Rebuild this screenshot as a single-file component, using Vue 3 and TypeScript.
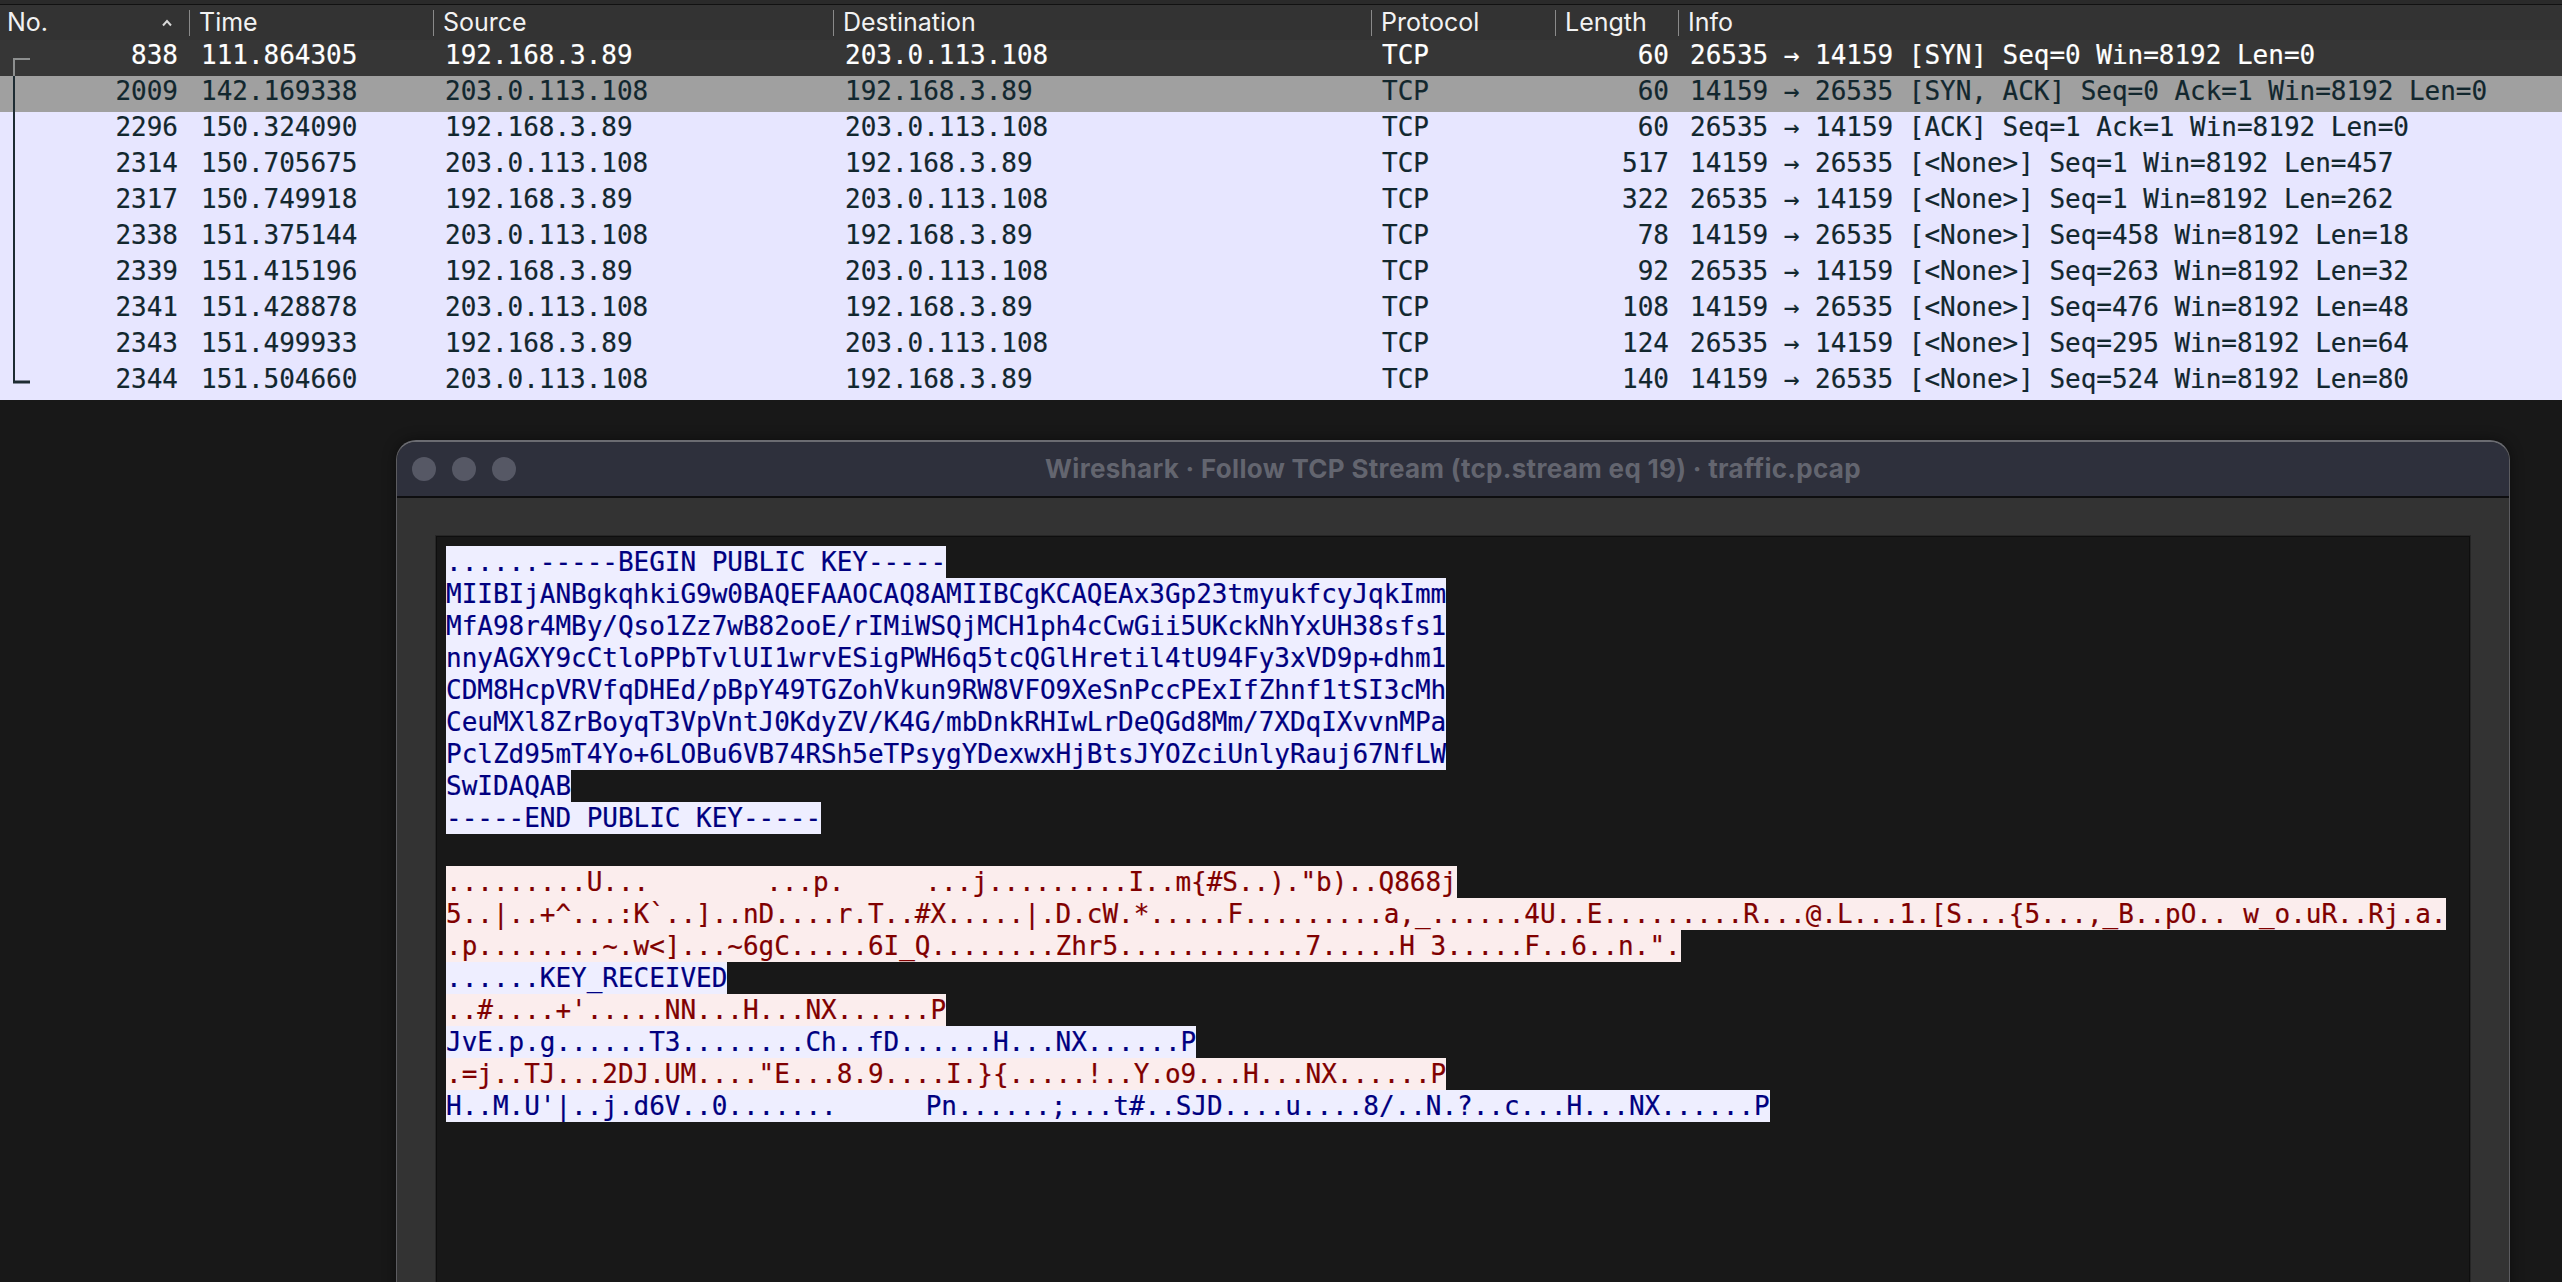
<script setup lang="ts">
interface Packet { no: number; time: string; src: string; dst: string; len: number; info: string }
const A = '192.168.3.89'
const B = '203.0.113.108'
const packets: Packet[] = [
  { no: 838, time: '111.864305', src: A, dst: B, len: 60, info: '26535 → 14159 [SYN] Seq=0 Win=8192 Len=0' },
  { no: 2009, time: '142.169338', src: B, dst: A, len: 60, info: '14159 → 26535 [SYN, ACK] Seq=0 Ack=1 Win=8192 Len=0' },
  { no: 2296, time: '150.324090', src: A, dst: B, len: 60, info: '26535 → 14159 [ACK] Seq=1 Ack=1 Win=8192 Len=0' },
  { no: 2314, time: '150.705675', src: B, dst: A, len: 517, info: '14159 → 26535 [<None>] Seq=1 Win=8192 Len=457' },
  { no: 2317, time: '150.749918', src: A, dst: B, len: 322, info: '26535 → 14159 [<None>] Seq=1 Win=8192 Len=262' },
  { no: 2338, time: '151.375144', src: B, dst: A, len: 78, info: '14159 → 26535 [<None>] Seq=458 Win=8192 Len=18' },
  { no: 2339, time: '151.415196', src: A, dst: B, len: 92, info: '26535 → 14159 [<None>] Seq=263 Win=8192 Len=32' },
  { no: 2341, time: '151.428878', src: B, dst: A, len: 108, info: '14159 → 26535 [<None>] Seq=476 Win=8192 Len=48' },
  { no: 2343, time: '151.499933', src: A, dst: B, len: 124, info: '26535 → 14159 [<None>] Seq=295 Win=8192 Len=64' },
  { no: 2344, time: '151.504660', src: B, dst: A, len: 140, info: '14159 → 26535 [<None>] Seq=524 Win=8192 Len=80' },
]

const columns = ['Time', 'Source', 'Destination', 'Protocol', 'Length', 'Info']

interface Seg { text?: string; gap?: number }
interface Line { kind: 'c' | 's' | 'blank'; segs: Seg[] }
const t = (kind: 'c' | 's', text: string): Line => ({ kind, segs: [{ text }] })

const lines: Line[] = [
  t('c', '......-----BEGIN PUBLIC KEY-----'),
  t('c', 'MIIBIjANBgkqhkiG9w0BAQEFAAOCAQ8AMIIBCgKCAQEAx3Gp23tmyukfcyJqkImm'),
  t('c', 'MfA98r4MBy/Qso1Zz7wB82ooE/rIMiWSQjMCH1ph4cCwGii5UKckNhYxUH38sfs1'),
  t('c', 'nnyAGXY9cCtloPPbTvlUI1wrvESigPWH6q5tcQGlHretil4tU94Fy3xVD9p+dhm1'),
  t('c', 'CDM8HcpVRVfqDHEd/pBpY49TGZohVkun9RW8VFO9XeSnPccPExIfZhnf1tSI3cMh'),
  t('c', 'CeuMXl8ZrBoyqT3VpVntJ0KdyZV/K4G/mbDnkRHIwLrDeQGd8Mm/7XDqIXvvnMPa'),
  t('c', 'PclZd95mT4Yo+6LOBu6VB74RSh5eTPsygYDexwxHjBtsJYOZciUnlyRauj67NfLW'),
  t('c', 'SwIDAQAB'),
  t('c', '-----END PUBLIC KEY-----'),
  { kind: 'blank', segs: [] },
  {
    kind: 's',
    segs: [
      { text: '.........U...' }, { gap: 117 }, { text: '...p.' }, { gap: 81 },
      { text: '...j.........I..m{#S..)."b)..Q868j' },
    ],
  },
  t('s', '5..|..+^...:K`..]..nD....r.T..#X.....|.D.cW.*.....F.........a,_......4U..E.........R...@.L...1.[S...{5...,_B..pO.. w_o.uR..Rj.a.'),
  t('s', '.p........~.w<]...~6gC.....6I_Q........Zhr5............7.....H 3.....F..6..n.".'),
  t('c', '......KEY_RECEIVED'),
  t('s', "..#....+'.....NN...H...NX......P"),
  t('c', 'JvE.p.g......T3........Ch..fD......H...NX......P'),
  t('s', '.=j..TJ...2DJ.UM...."E...8.9....I.}{.....!..Y.o9...H...NX......P'),
  {
    kind: 'c',
    segs: [
      { text: "H..M.U'|..j.d6V..0......." }, { gap: 89 },
      { text: 'Pn......;...t#..SJD....u....8/..N.?..c...H...NX......P' },
    ],
  },
]
</script>

<template>
  <div class="screen">
    <section class="packets">
      <header class="list-head">
        <div class="hcell hno">
          <span>No.</span>
          <svg class="caret" width="12" height="8" viewBox="0 0 12 8">
            <path d="M2 6.5 6 2l4 4.5" fill="none" stroke="#d8d8d8" stroke-width="2" />
          </svg>
        </div>
        <div v-for="c in columns" :key="c" class="hcell sep"><span>{{ c }}</span></div>
      </header>
      <div class="rows">
        <div
          v-for="(p, i) in packets"
          :key="p.no"
          class="row"
          :class="{ first: i === 0, selected: i === 1 }"
        >
          <span class="no">{{ p.no }}</span>
          <span class="cell">{{ p.time }}</span>
          <span class="cell">{{ p.src }}</span>
          <span class="cell">{{ p.dst }}</span>
          <span class="proto">TCP</span>
          <span class="len">{{ p.len }}</span>
          <span class="cell">{{ p.info }}</span>
        </div>
        <svg class="bracket" width="24" height="346" viewBox="0 0 24 346">
          <path d="M23 19H7V37" fill="none" stroke="#8d8f8f" stroke-width="2" />
          <path d="M7 36V342" fill="none" stroke="#1e2c33" stroke-width="2" />
          <path d="M6 342H23" fill="none" stroke="#1e2c33" stroke-width="3" />
        </svg>
      </div>
    </section>

    <section class="window">
      <div class="titlebar">
        <div class="dots">
          <i class="dot" /><i class="dot" /><i class="dot" />
        </div>
        <div class="title">Wireshark · Follow TCP Stream (tcp.stream eq 19) · traffic.pcap</div>
      </div>
      <div class="window-body">
        <div class="stream">
          <div v-for="(l, i) in lines" :key="i" class="line" :class="l.kind">
            <template v-for="(s, j) in l.segs" :key="j">
              <span v-if="s.text">{{ s.text }}</span>
              <span v-else class="gap" :style="{ width: s.gap + 'px' }" />
            </template>
          </div>
        </div>
      </div>
    </section>
  </div>
</template>

<style>
html, body { margin: 0; background: #181818; }
</style>

<style scoped>
.screen {
  height: 1282px;
  width: 2562px;
  overflow: hidden;
  background: #181818;
}
.screen::before {
  content: "";
  display: block;
  height: 4px;
  margin-bottom: -4px;
  background: #2a2a2a;
}
.packets {
  border-top: 1px solid #111;
  margin-top: 4px;
}
.list-head {
  display: grid;
  grid-template-columns: 189px 244px 400px 538px 184px 123px 1fr;
  height: 35px;
  align-items: center;
  background: #333333;
  color: #f2f2f2;
  font: 400 25px/26px "Inter", "Liberation Sans", sans-serif;
}
.hcell {
  display: flex;
  align-items: center;
  height: 26px;
  box-sizing: border-box;
  padding-left: 9px;
  white-space: nowrap;
}
.hcell span { margin-top: -2px; }
.hno {
  padding-left: 7px;
  justify-content: space-between;
  padding-right: 16px;
}
.sep { border-left: 1px solid #8a8a8a; }
.rows { position: relative; }
.row {
  display: grid;
  grid-template-columns: 189px 244px 400px 538px 184px 123px 1fr;
  height: 36px;
  background: #e7e6ff;
  color: #12272e;
  font: 400 26px/31px "DejaVu Sans Mono", "Liberation Mono", monospace;
  letter-spacing: -0.025px;
  -webkit-text-stroke: 0.2px currentColor;
  white-space: pre;
}
.row.first { background: #363636; color: #ffffff; }
.row.selected { background: #a0a0a0; }
.no { text-align: right; padding-right: 11px; }
.cell { padding-left: 12px; }
.proto { padding-left: 11px; }
.len { text-align: right; padding-right: 9px; }
.bracket {
  position: absolute;
  left: 7px;
  top: 0;
  overflow: visible;
}
.window {
  margin: 40px 0 0 396px;
  width: 2114px;
  height: 1000px;
  border-radius: 20px 20px 0 0;
  border: 1px solid #5c5c60;
  border-top: 2px solid #6b6c72;
  box-sizing: border-box;
  overflow: hidden;
  background: #333333;
  box-shadow: 0 0 14px rgba(0, 0, 0, 0.45);
}
.titlebar {
  height: 54px;
  background: #2e303c;
  border-bottom: 2px solid #0e0e10;
  display: flex;
  align-items: center;
  position: relative;
}
.dots { display: flex; gap: 16px; padding-left: 15px; }
.dot {
  width: 24px;
  height: 24px;
  border-radius: 50%;
  background: #565865;
}
.title {
  position: absolute;
  left: 0;
  right: 0;
  text-align: center;
  color: #63656f;
  font: 700 26px/50px "Inter", "Liberation Sans", sans-serif;
  letter-spacing: 0.3px;
}
.window-body {
  padding: 38px 39px 0 39px;
}
.stream {
  background: #181818;
  border: 1px solid #0e0e0e;
  outline: 1px solid #262626;
  box-sizing: border-box;
  height: 900px;
  padding: 9px 9px;
  overflow: hidden;
}
.line {
  width: fit-content;
  height: 32px;
  white-space: pre;
  font: 400 26px/32px "DejaVu Sans Mono", "Liberation Mono", monospace;
  letter-spacing: -0.025px;
  -webkit-text-stroke: 0.2px currentColor;
}
.line.c { background: #eeeeff; color: #000080; }
.line.s { background: #fbeded; color: #800000; }
.gap { display: inline-block; height: 1px; }
</style>
